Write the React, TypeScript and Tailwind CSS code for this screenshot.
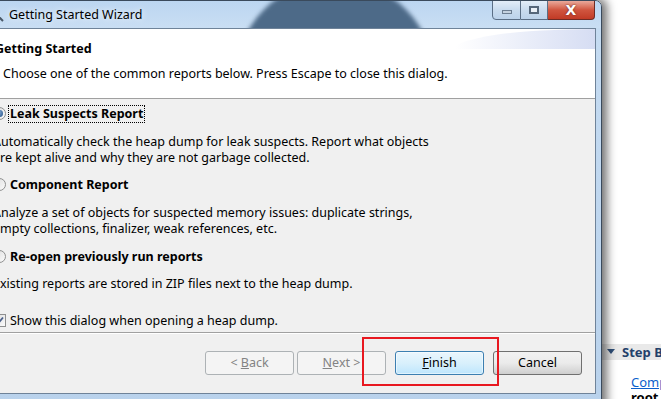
import React from "react";

const font = { fontFamily: '"Noto Sans", "Liberation Sans", sans-serif' };

function Radio({ checked }: { checked?: boolean }) {
  return (
    <span className="w-[13px] h-[13px] rounded-full border border-[#8e8f8f] bg-gradient-to-br from-[#dcdcdc] to-[#fbfbfb] flex items-center justify-center shrink-0">
      {checked && (
        <span className="w-[7px] h-[7px] rounded-full bg-[radial-gradient(circle_at_35%_35%,#8fb3dc,#1c4a80)]" />
      )}
    </span>
  );
}

function Checkbox() {
  return (
    <span className="w-[13px] h-[13px] border border-[#8e8f8f] bg-gradient-to-br from-[#dcdcdc] to-[#fbfbfb] flex items-center justify-center shrink-0">
      <svg width="9" height="9" viewBox="0 0 9 9">
        <path d="M1 4.5 L3.5 7 L8 1.5" fill="none" stroke="#4a5f8a" strokeWidth="1.8" />
      </svg>
    </span>
  );
}

function Button({
  children,
  variant,
}: {
  children: React.ReactNode;
  variant: "disabled" | "default" | "normal";
}) {
  const cls =
    variant === "disabled"
      ? "border-[#adb2b5] bg-[#f4f4f4] text-[#838383]"
      : variant === "default"
      ? "border-[#3c7fb1] bg-gradient-to-b from-[#eaf6fd] via-[#d9f0fc] to-[#bee6fd] text-black shadow-[inset_0_0_0_1px_#ffffff80]"
      : "border-[#707070] bg-gradient-to-b from-[#f2f2f2] via-[#ebebeb] to-[#cfcfcf] text-black";
  return (
    <div
      className={`w-[89px] h-[24px] rounded-[3px] border flex items-center justify-center text-[12.5px] ${cls}`}
    >
      {children}
    </div>
  );
}

export default function App() {
  return (
    <div
      className="relative w-[661px] h-[399px] overflow-hidden bg-white flex text-[12.5px] leading-[16px] text-black"
      style={font}
    >
      {/* wizard window */}
      <div className="relative z-10 shrink-0 w-[622px] h-[412px] -ml-[20px] flex flex-col rounded-t-[7px] border border-[#3a4a5c] bg-gradient-to-b from-[#c6dcf2] to-[#b9d2ec] shadow-[3px_0_10px_2px_rgba(0,0,0,0.55)]">
        {/* title bar */}
        <div className="relative h-[27px] shrink-0 flex items-start overflow-hidden rounded-t-[6px] bg-gradient-to-b from-[#bcd6f1] to-[#c9def3]">
          <div className="absolute left-[254px] -top-[21px] w-[200px] h-[200px] rounded-full bg-[#4d6a88] blur-[2px]" />
          <div className="relative flex items-center gap-[4px] pl-[8px] h-[28px]">
            <svg width="16" height="16" viewBox="0 0 16 16">
              <circle cx="6" cy="6" r="4" fill="#e8f2fb" stroke="#4a5868" strokeWidth="1.4" />
              <path d="M9 9 L14 14" stroke="#4a5868" strokeWidth="2" />
            </svg>
            <span className="[text-shadow:0_0_6px_#ffffff]">Getting Started Wizard</span>
          </div>
          <div className="relative ml-auto mr-[6px] -mt-px flex h-[20px]">
            <div className="w-[29px] h-full rounded-bl-[4px] border border-[#5b6e85] bg-gradient-to-b from-[#e3edf8] via-[#c9dbee] to-[#bcd2ea] flex items-center justify-center">
              <span className="w-[10px] h-[4px] border border-[#6d7e92] bg-[#c5d2e0] mt-[4px]" />
            </div>
            <div className="w-[27px] h-full border-y border-r border-[#5b6e85] bg-gradient-to-b from-[#e3edf8] via-[#c9dbee] to-[#bcd2ea] flex items-center justify-center">
              <span className="w-[10px] h-[8px] border-[2px] border-[#55667a] bg-[#e9eff6]" />
            </div>
            <div className="w-[47px] h-full rounded-br-[4px] border-y border-r border-[#6e2b24] bg-gradient-to-b from-[#e9a99b] via-[#d0553f] to-[#c13a25] flex items-center justify-center">
              <span className="text-white font-bold text-[14px] leading-none [text-shadow:0_0_2px_#5a1a10]" style={{ fontFamily: '"DejaVu Sans", sans-serif' }}>
                X
              </span>
            </div>
          </div>
        </div>

        {/* client area */}
        <div className="ml-[7px] mr-[5px] h-[366px] shrink-0 flex flex-col border border-[#6f8399] bg-[#f0f0f0]">
          {/* header */}
          <div className="relative h-[70px] shrink-0 bg-white border-b border-[#a0a0a0] overflow-hidden">
            <div className="absolute right-0 top-0 w-[140px] h-[20px] rounded-tl-[140px_20px] bg-gradient-to-r from-white to-[#d6ddf3]" />
            <div className="relative pl-[6px] pt-[12px] font-bold">Getting Started</div>
            <div className="relative pl-[14px] pt-[9px]">
              Choose one of the common reports below. Press Escape to close this dialog.
            </div>
          </div>

          {/* body */}
          <div className="h-[234px] shrink-0 pl-[4px] pt-[5px] flex flex-col border-b border-[#a0a0a0]">
            <div className="flex items-center gap-[2px] h-[19px]">
              <Radio checked />
              <span className="font-bold border border-dotted border-black px-[1px]">Leak Suspects Report</span>
            </div>
            <div className="mt-[11px]">
              Automatically check the heap dump for leak suspects. Report what objects
              <br />
              are kept alive and why they are not garbage collected.
            </div>
            <div className="mt-[9px] flex items-center gap-[2px] h-[19px]">
              <Radio />
              <span className="font-bold border border-transparent px-[1px]">Component Report</span>
            </div>
            <div className="mt-[11px]">
              Analyze a set of objects for suspected memory issues: duplicate strings,
              <br />
              empty collections, finalizer, weak references, etc.
            </div>
            <div className="mt-[10px] flex items-center gap-[2px] h-[19px]">
              <Radio />
              <span className="font-bold border border-transparent px-[1px]">Re-open previously run reports</span>
            </div>
            <div className="mt-[10px]">Existing reports are stored in ZIP files next to the heap dump.</div>
            <div className="mt-[19px] flex items-center gap-[2px] h-[19px]">
              <Checkbox />
              <span className="border border-transparent px-[1px]">Show this dialog when opening a heap dump.</span>
            </div>
          </div>

          {/* buttons */}
          <div className="flex-1 flex justify-end items-start pt-[17px] pr-[13px] border-t border-white">
            <Button variant="disabled">
              &lt;&nbsp;<span className="underline">B</span>ack
            </Button>
            <div className="ml-[3px]">
              <Button variant="disabled">
                <span className="underline">N</span>ext&nbsp;&gt;
              </Button>
            </div>
            <div className="ml-[9px]">
              <Button variant="default">
                <span className="underline">F</span>inish
              </Button>
            </div>
            <div className="ml-[9px]">
              <Button variant="normal">Cancel</Button>
            </div>
          </div>
        </div>
      </div>

      {/* right panel behind the dialog */}
      <div className="flex-1 flex flex-col pt-[344px] overflow-hidden whitespace-nowrap">
        <div className="h-[16px] bg-[#e9e9e9] flex items-center pl-[5px] gap-[7px]">
          <svg width="8" height="6" viewBox="0 0 8 6" className="shrink-0">
            <path d="M0 0 L8 0 L4 5 Z" fill="#2f4f78" />
          </svg>
          <span className="font-bold text-[13px] text-[#23406a]">Step By</span>
        </div>
        <div className="pl-[29px] mt-[15px] text-[13px] leading-[15px] text-[#0b5fcc] underline">Compare</div>
        <div className="pl-[29px] text-[13px] leading-[15px] font-bold">root</div>
      </div>

      {/* red highlight */}
      <div className="absolute left-[362px] top-[337px] w-[137px] h-[49px] border-2 border-[#e81820] z-20" />
    </div>
  );
}
